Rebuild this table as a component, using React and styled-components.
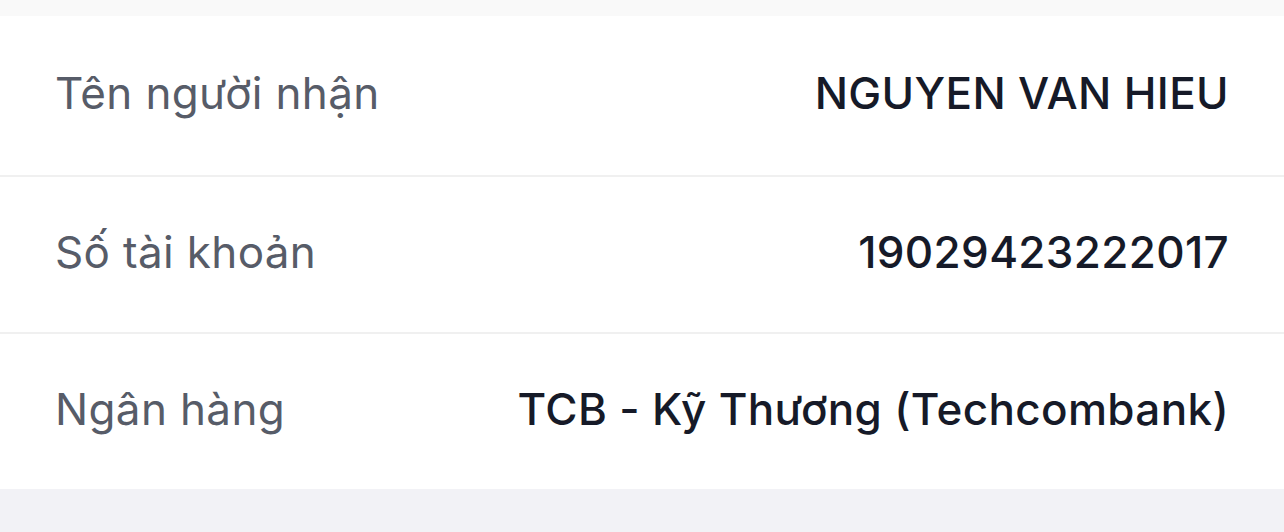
import React from "react";
import styled, { createGlobalStyle } from "styled-components";

const Global = createGlobalStyle`
  html, body { margin: 0; padding: 0; background: #f2f2f6; }
  body { font-family: Inter, "Noto Sans", sans-serif; }
`;

const Page = styled.div`
  width: 1284px;
  height: 532px;
  background: #f2f2f6;
  display: flex;
  flex-direction: column;
`;

const TopStrip = styled.div`
  height: 16px;
  background: #f9f9f9;
`;

const Card = styled.div`
  background: #ffffff;
  display: flex;
  flex-direction: column;
`;

const Row = styled.div`
  height: ${(p) => (p.$first ? "159px" : "157px")};
  display: flex;
  align-items: center;
  justify-content: space-between;
  padding: 0 55px 6px 55px;
  box-sizing: border-box;
  border-top: ${(p) => (p.$first ? "none" : "2px solid #f0f0f0")};
`;

const Label = styled.span`
  font-size: 44px;
  color: #575c68;
  font-weight: 400;
  letter-spacing: 0.35px;
`;

const Value = styled.span`
  font-size: 44px;
  color: #161a28;
  font-weight: 500;
  letter-spacing: 0.35px;
`;

const rows = [
  ["Tên người nhận", "NGUYEN VAN HIEU"],
  ["Số tài khoản", "19029423222017"],
  ["Ngân hàng", "TCB - Kỹ Thương (Techcombank)"],
];

export default function App() {
  return (
    <Page>
      <Global />
      <TopStrip />
      <Card>
        {rows.map(([l, v], i) => (
          <Row key={l} $first={i === 0}>
            <Label>{l}</Label>
            <Value>{v}</Value>
          </Row>
        ))}
      </Card>
    </Page>
  );
}
